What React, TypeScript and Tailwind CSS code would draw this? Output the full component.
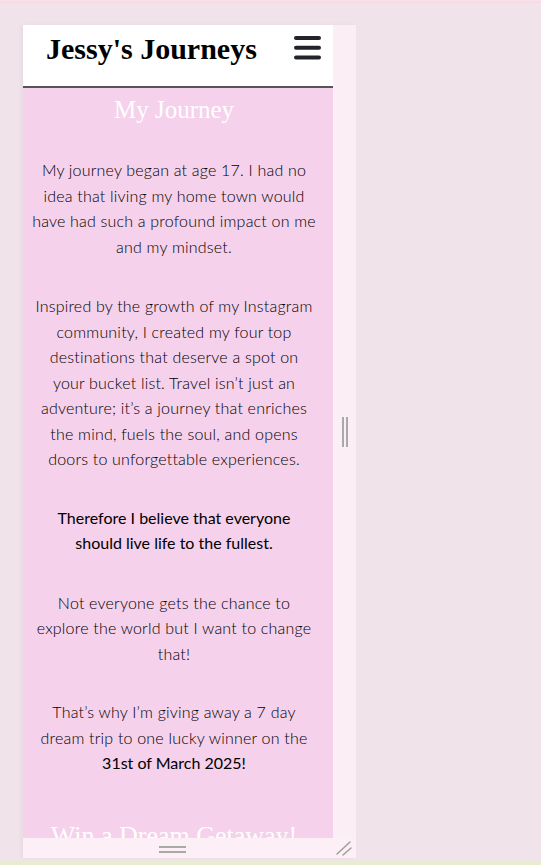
export default function App() {
  const lato = { fontFamily: "Lato, 'Noto Sans', sans-serif" };
  const serif = { fontFamily: "'Liberation Serif', 'Times New Roman', serif" };

  return (
    <div className="w-[541px] h-[865px] bg-[#f1e3ea] flex flex-col overflow-hidden">
      {/* top ruler line */}
      <div className="h-[2px]" />
      <div className="h-[1px] bg-[#fcd6df]" />
      <div className="h-[22px]" />

      {/* device frame */}
      <div className="ml-[23px] w-[333px] h-[833px] flex flex-col shadow-[-2px_0_4px_rgba(0,0,0,0.04)]">
        <div className="flex h-[813px]">
          <div className="w-[310px] h-full overflow-hidden bg-[#f5d1eb]">
            <header className="h-[63px] bg-white border-b-2 border-[#555] flex justify-between items-start pl-[23px] pr-[12px]">
              <h1 style={serif} className="mt-[7px] text-[30px] leading-[33px] font-bold text-black">
                Jessy's Journeys
              </h1>
              <svg width="27" height="24" viewBox="0 0 27 24" className="mt-[11px]">
                <g stroke="#212529" strokeWidth="4" strokeLinecap="round">
                  <line x1="2" y1="2" x2="25" y2="2" />
                  <line x1="2" y1="11.8" x2="25" y2="11.8" />
                  <line x1="2" y1="21.5" x2="25" y2="21.5" />
                </g>
              </svg>
            </header>

            <section className="pl-[4px] pr-[12px] text-center">
              <h2 style={serif} className="mt-[8px] text-[25px] leading-[28px] text-white">
                My Journey
              </h2>
              <div style={lato} className="text-[16px] leading-[25.5px] text-black font-light tracking-[0.2px] whitespace-nowrap">
                <p className="mt-[33px]">
                  My journey began at age 17. I had no
                  <br />
                  idea that living my home town would
                  <br />
                  have had such a profound impact on me
                  <br />
                  and my mindset.
                </p>
                <p className="mt-[34px]">
                  Inspired by the growth of my Instagram
                  <br />
                  community, I created my four top
                  <br />
                  destinations that deserve a spot on
                  <br />
                  your bucket list. Travel isn’t just an
                  <br />
                  adventure; it’s a journey that enriches
                  <br />
                  the mind, fuels the soul, and opens
                  <br />
                  doors to unforgettable experiences.
                </p>
                <p className="mt-[33px] font-normal tracking-normal">
                  Therefore I believe that everyone
                  <br />
                  should live life to the fullest.
                </p>
                <p className="mt-[34px]">
                  Not everyone gets the chance to
                  <br />
                  explore the world but I want to change
                  <br />
                  that!
                </p>
                <p className="mt-[33px]">
                  That’s why I’m giving away a 7 day
                  <br />
                  dream trip to one lucky winner on the
                  <br />
                  <span className="font-normal tracking-normal">31st of March 2025!</span>
                </p>
              </div>
              <h2 style={serif} className="mt-[46px] text-[26px] leading-[28px] text-white">
                Win a Dream Getaway!
              </h2>
            </section>
          </div>

          {/* right resize strip */}
          <div className="w-[23px] h-full bg-[#fbeff5] flex items-center justify-center gap-[2px]">
            <div className="w-[2px] h-[30px] bg-[#a9a9a9]" />
            <div className="w-[2px] h-[30px] bg-[#a9a9a9]" />
          </div>
        </div>

        {/* bottom resize strip */}
        <div className="h-[20px] bg-[#fcf0f6] flex items-center relative">
          <div className="ml-[136px] mt-[3px] flex flex-col gap-[3px]">
            <div className="w-[27px] h-[2px] bg-[#a9a9a9]" />
            <div className="w-[27px] h-[2px] bg-[#a9a9a9]" />
          </div>
          <svg width="18" height="18" viewBox="0 0 18 18" className="absolute right-[3px] bottom-[1px]">
            <g stroke="#a0a0a0" strokeWidth="1.6" strokeLinecap="round">
              <line x1="2" y1="15" x2="15" y2="3" />
              <line x1="8" y1="16" x2="16" y2="9" />
            </g>
          </svg>
        </div>
      </div>

      <div className="h-[4px]" />
      <div className="h-[3px] bg-[#e5f0cb]" />
    </div>
  );
}
